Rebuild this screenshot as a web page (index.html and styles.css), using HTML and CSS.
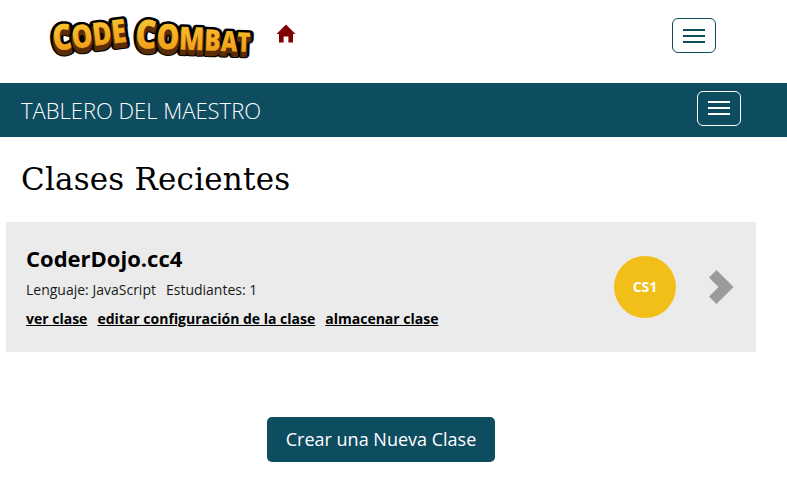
FILE: index.html
```html
<!DOCTYPE html>
<html lang="es">
<head>
<meta charset="utf-8">
<title>Tablero del Maestro</title>
<link rel="stylesheet" href="styles.css">
</head>
<body>
<header class="topnav">
  <a class="logo" href="#">
    <svg width="210" height="46" viewBox="0 0 210 46">
      <defs>
        <linearGradient id="gold" x1="0" y1="0" x2="0" y2="1">
          <stop offset="0" stop-color="#fcd53a"/>
          <stop offset="1" stop-color="#ee8f10"/>
        </linearGradient>
        <text id="word-code" transform="translate(7 37) rotate(-7) scale(.82 1)"><tspan font-size="36">C</tspan><tspan font-size="32">O</tspan><tspan font-size="32">D</tspan><tspan font-size="33">E</tspan></text>
        <text id="word-combat" transform="translate(88 34) rotate(2) scale(.815 1)"><tspan font-size="40">C</tspan><tspan font-size="35">O</tspan><tspan font-size="32">M</tspan><tspan font-size="30">B</tspan><tspan font-size="28">A</tspan><tspan font-size="27">T</tspan></text>
      </defs>
      <g class="logo-text">
        <use class="logo-back" href="#word-code" y="2"/>
        <use class="logo-back" href="#word-combat" y="2"/>
        <use class="logo-brown" href="#word-code" y="4"/>
        <use class="logo-brown" href="#word-combat" y="4"/>
        <use class="logo-fill" href="#word-code"/>
        <use class="logo-fill" href="#word-combat"/>
      </g>
    </svg>
  </a>
  <a class="home" href="#" aria-label="Inicio">
    <svg width="20" height="19" viewBox="0 0 20 19"><path fill="#800000" d="M10 .5 19.5 10H17v8.5h-4.6V12.6H7.6v5.9H3V10H.5z"/></svg>
  </a>
  <button class="burger burger-dark" aria-label="Menú"><span></span><span></span><span></span></button>
</header>
<nav class="dashbar">
  <span class="dashbar-title">TABLERO DEL MAESTRO</span>
  <button class="burger burger-light" aria-label="Menú"><span></span><span></span><span></span></button>
</nav>
<main>
  <h1 class="page-title">Clases Recientes</h1>
  <section class="card">
    <div class="card-info">
      <h2 class="card-name">CoderDojo.cc4</h2>
      <div class="card-meta"><span>Lenguaje: JavaScript</span><span>Estudiantes: 1</span></div>
      <div class="card-links"><a href="#">ver clase</a><a href="#">editar configuración de la clase</a><a href="#">almacenar clase</a></div>
    </div>
    <div class="badge">CS1</div>
    <svg class="chevron" width="26" height="34" viewBox="0 0 26 34"><path fill="#9b9b9b" d="M8.5 0 25.5 17 8.5 34 1 26.5 10.5 17 1 7.5z"/></svg>
  </section>
  <div class="actions"><a class="primary" href="#">Crear una Nueva Clase</a></div>
</main>
</body>
</html>
```
FILE: styles.css
```css
* { box-sizing: border-box; }
html, body { margin: 0; padding: 0; }
body { background: #fff; color: #000; font-family: "Open Sans", sans-serif; width: 787px; overflow-x: hidden; }

.topnav { height: 83px; display: flex; align-items: flex-start; padding: 0 71px 0 47px; }
.logo { display: block; margin-top: 14px; height: 46px; }
.logo svg { display: block; }
.logo-text { font-family: "Open Sans", sans-serif; font-weight: 800; }
.logo-back { fill: #000; stroke: #000; stroke-width: 9px; stroke-linejoin: round; }
.logo-brown { fill: #5a2c08; stroke: #5a2c08; stroke-width: 3px; stroke-linejoin: round; }
.logo-fill { fill: url(#gold); }
.home { display: block; margin: 24px 0 0 19px; height: 19px; }
.home svg { display: block; }

.burger { width: 44px; height: 35px; border-radius: 6px; background: transparent; padding: 0; display: flex; flex-direction: column; justify-content: center; align-items: center; gap: 4px; }
.burger span { display: block; width: 22px; height: 2px; }
.burger-dark { border: 1px solid #0e4c60; margin: 18px 0 0 auto; }
.burger-dark span { background: #0e4c60; }
.burger-light { border: 1px solid #fff; margin: 0 0 4px auto; }
.burger-light span { background: #fff; }

.dashbar { height: 54px; background: #0e4c60; display: flex; align-items: center; padding: 0 46px 0 21px; }
.dashbar-title { color: #fff; font-size: 22px; font-weight: 300; }

.page-title { margin: 22px 0 0 21px; font-family: "DejaVu Serif", serif; font-weight: 400; font-size: 31px; line-height: 40px; letter-spacing: 0.2px; }

.card { width: 750px; height: 130px; margin: 23px 0 0 6px; background: #ebebeb; display: flex; align-items: center; padding: 0 22px 0 20px; }
.card-info { flex: 1; padding-bottom: 2px; }
.card-name { margin: 0 0 7px; font-size: 22px; font-weight: 700; line-height: 30px; }
.card-meta { font-size: 14px; line-height: 20px; margin-top: 5px; color: #1a1a1a; display: flex; gap: 10px; }
.card-links { display: flex; gap: 10px; font-size: 14px; line-height: 20px; margin-top: 9px; }
.card-links a { color: #000; font-weight: 700; text-decoration: underline; }
.badge { width: 62px; height: 62px; border-radius: 50%; background: #f2be18; color: #fff; font-size: 14px; font-weight: 700; display: flex; align-items: center; justify-content: center; padding-bottom: 2px; }
.chevron { margin-left: 32px; display: block; }

.actions { display: flex; justify-content: center; margin-top: 65px; padding-right: 25px; }
.primary { display: block; width: 228px; height: 45px; background: #0e4c60; color: #fff; border-radius: 5px; font-size: 18px; line-height: 45px; text-align: center; text-decoration: none; }
```
